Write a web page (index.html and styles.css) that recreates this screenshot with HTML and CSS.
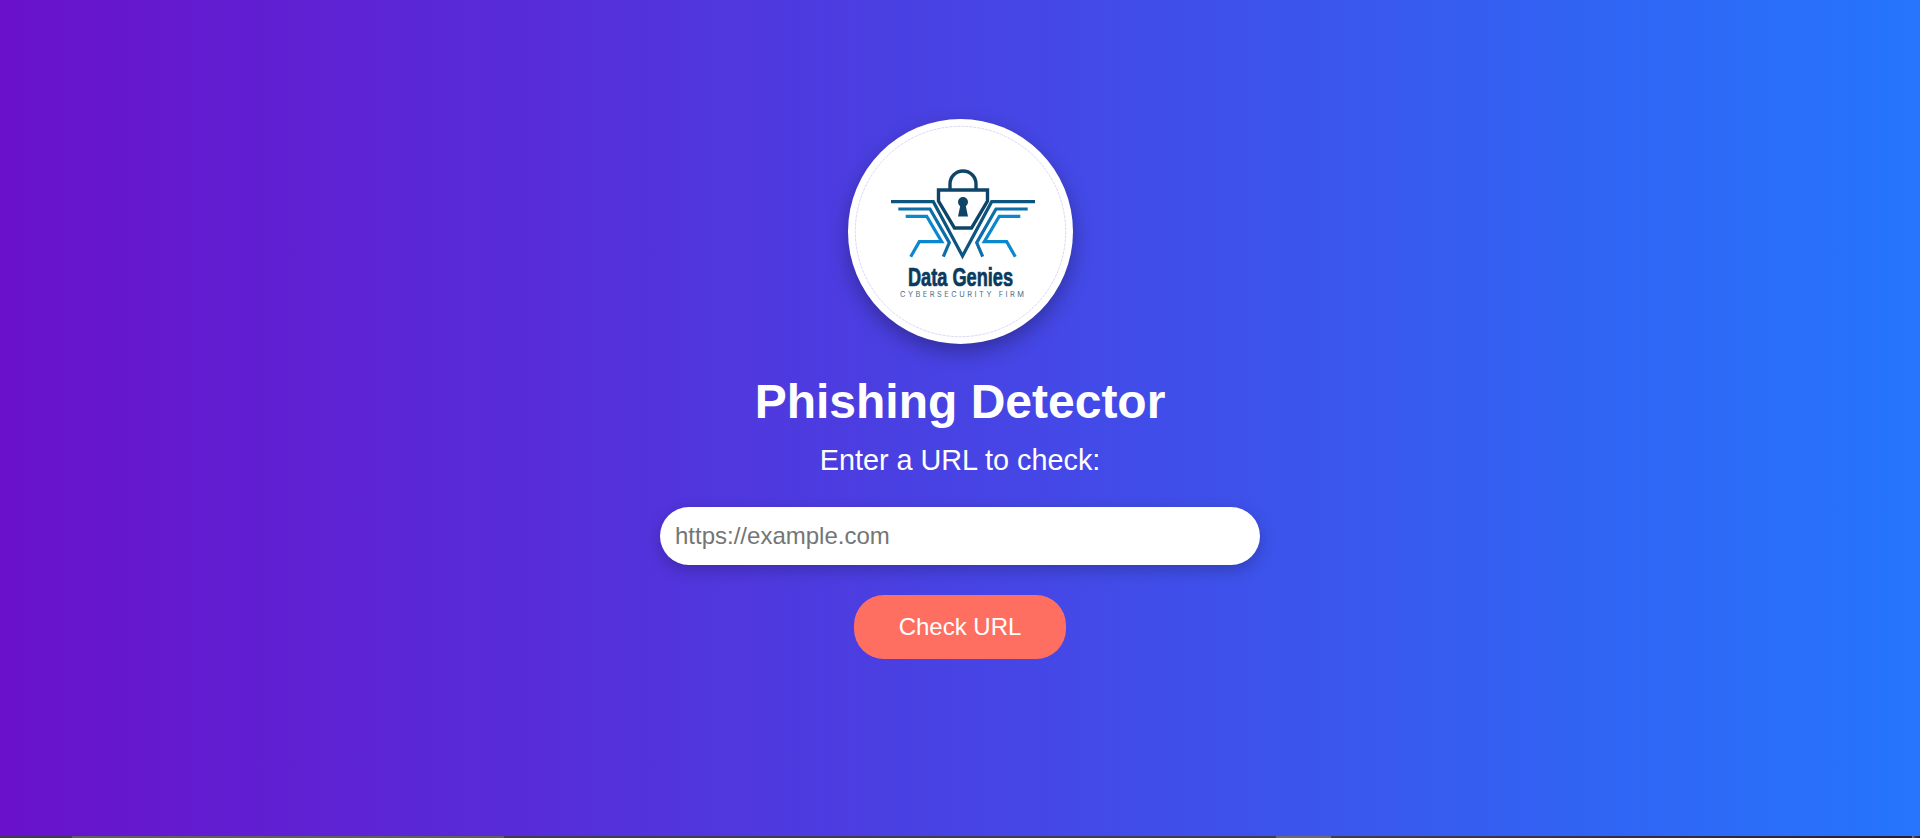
FILE: index.html
```html
<!DOCTYPE html>
<html lang="en">
<head>
    <meta charset="UTF-8">
    <meta name="viewport" content="width=device-width, initial-scale=1.0">
    <title>Phishing Detector</title>
    <link rel="stylesheet" href="styles.css">
</head>
<body>
    <main class="container">
        <div class="logo">
            <svg class="logo-art" width="225" height="225" viewBox="0 0 225 225">
                <circle class="logo-ring" cx="112.5" cy="112.5" r="105.2"/>
                <path class="lock" d="M102 70V65A13 13 0 0 1 128 65V70"/>
                <path class="lock" d="M90.5 71H139.5V82L123.5 109H106.5L90.5 82Z"/>
                <circle class="keyhole" cx="115" cy="83" r="5"/>
                <path class="keyhole" d="M112.6 85H117.4L120 97.5H110Z"/>
                <path class="wing-top" d="M43 82.7H85.3L114.5 137L143.7 82.7H187"/>
                <g id="wing-left">
                    <path class="wing-mid" d="M50.3 90H82L101.3 123.7L95.3 137.7"/>
                    <path class="wing-low" d="M57.7 97.3H78.7L93.7 122.7H71.3L62.7 137.7"/>
                </g>
                <use href="#wing-left" transform="matrix(-1 0 0 1 230 0)"/>
                <text class="logo-name" x="60" y="166.5" textLength="105" lengthAdjust="spacingAndGlyphs">Data Genies</text>
                <text class="logo-tag" x="52" y="178" textLength="124">CYBERSECURITY FIRM</text>
            </svg>
        </div>
        <h1>Phishing Detector</h1>
        <p class="lead">Enter a URL to check:</p>
        <form class="check-form">
            <input type="text" class="url-input" placeholder="https://example.com">
            <button type="submit" class="check-btn">Check URL</button>
        </form>
    </main>

    <div class="strip">
        <span class="strip-dark strip-a"></span>
        <span class="strip-thumb strip-b"></span>
        <span class="strip-dark strip-c"></span>
        <span class="strip-light strip-d"></span>
        <span class="strip-fade strip-e"></span>
        <span class="strip-light strip-f"></span>
        <span class="strip-fade strip-g"></span>
    </div>
</body>
</html>
```

FILE: styles.css
```css
html, body {
    height: 100%;
}

body {
    margin: 0;
    padding: 0;
    display: flex;
    flex-direction: column;
    overflow: hidden;
    font-family: "Liberation Sans", Arial, sans-serif;
    color: white;
    background: linear-gradient(90deg, #6a11cb, #2575fc);
}

.container {
    flex: 1;
    display: flex;
    flex-direction: column;
    align-items: center;
    padding-top: 119px;
}

.logo {
    width: 225px;
    height: 225px;
    border-radius: 50%;
    background-color: white;
    box-shadow: 0 8px 20px rgba(0, 0, 0, 0.3);
}

.logo-art {
    display: block;
}

.logo-ring {
    fill: none;
    stroke: #cfccf6;
    stroke-width: 0.8;
    stroke-dasharray: 3 1;
}

.lock {
    fill: none;
    stroke: #0d4468;
    stroke-width: 3.4;
}

.keyhole {
    fill: #0d4468;
}

.wing-top, .wing-mid, .wing-low {
    fill: none;
    stroke-width: 3.2;
}

.wing-top {
    stroke: #0d5480;
}

.wing-mid {
    stroke: #0b6ea8;
}

.wing-low {
    stroke: #0a88cf;
}

.logo-name {
    font-size: 25px;
    font-weight: bold;
    fill: #0b3a5c;
    stroke: #0b3a5c;
    stroke-width: 0.7;
}

.logo-tag {
    font-family: Inter, sans-serif;
    font-size: 7.4px;
    fill: #4a6d88;
}

h1 {
    margin: 30px 0 15px;
    font-size: 48px;
    font-weight: bold;
}

.lead {
    margin: 0 0 30px;
    font-size: 28.8px;
}

.check-form {
    display: flex;
    flex-direction: column;
    align-items: center;
    gap: 30px;
}

.url-input {
    box-sizing: border-box;
    width: 600px;
    padding: 15px;
    border: none;
    border-radius: 30px;
    outline: none;
    font-family: inherit;
    font-size: 24px;
    box-shadow: 0 5px 15px rgba(0, 0, 0, 0.22);
}

.check-btn {
    padding: 18px 45px;
    border: none;
    border-radius: 30px;
    background-color: #ff6f61;
    color: white;
    font-family: inherit;
    font-size: 24px;
    cursor: pointer;
}

.strip {
    display: flex;
    height: 2px;
    flex-shrink: 0;
}

.strip-dark {
    background-color: #3f3a55;
}

.strip-thumb {
    background-color: #5e5e5e;
}

.strip-light {
    background-color: #6e6a74;
}

.strip-fade {
    background: linear-gradient(90deg, #423c52, #271d3a);
}

.strip-a { width: 72px; }
.strip-b { width: 432px; }
.strip-c { width: 772px; }
.strip-d { width: 55px; }
.strip-e { width: 581px; }
.strip-f { width: 2px; }
.strip-g { width: 6px; }
```
